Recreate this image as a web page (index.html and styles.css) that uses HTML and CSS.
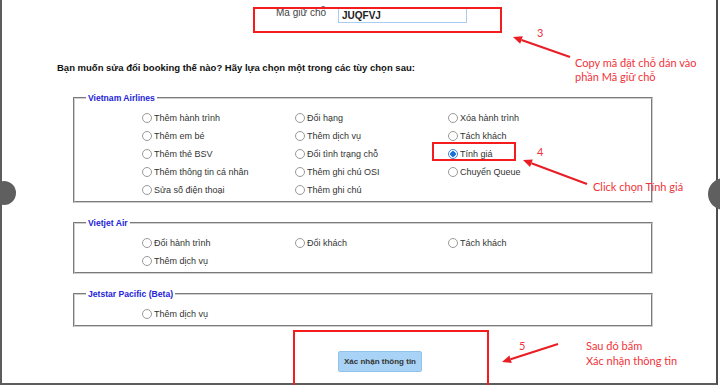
FILE: index.html
```html
<!DOCTYPE html>
<html lang="vi">
<head>
    <meta charset="UTF-8">
    <meta name="viewport" content="width=device-width, initial-scale=1.0">
    <title>Sửa đổi booking</title>
    <link rel="stylesheet" href="styles.css">
</head>
<body>
    <div class="viewer">
        <!-- Page content -->
        <div class="page">
            <div class="code-row">
                <label class="code-label" for="pnr">Mã giữ chỗ</label>
                <input class="code-input" id="pnr" type="text" value="JUQFVJ">
            </div>

            <p class="question">Bạn muốn sửa đổi booking thế nào? Hãy lựa chọn một trong các tùy chọn sau:</p>

            <fieldset class="airline">
                <legend>Vietnam Airlines</legend>
                <div class="options">
                    <label class="opt"><input type="radio" name="act">Thêm hành trình</label>
                    <label class="opt"><input type="radio" name="act">Đổi hạng</label>
                    <label class="opt"><input type="radio" name="act">Xóa hành trình</label>
                    <label class="opt"><input type="radio" name="act">Thêm em bé</label>
                    <label class="opt"><input type="radio" name="act">Thêm dịch vụ</label>
                    <label class="opt"><input type="radio" name="act">Tách khách</label>
                    <label class="opt"><input type="radio" name="act">Thêm thẻ BSV</label>
                    <label class="opt"><input type="radio" name="act">Đổi tình trạng chỗ</label>
                    <label class="opt"><input type="radio" name="act" checked>Tính giá</label>
                    <label class="opt"><input type="radio" name="act">Thêm thông tin cá nhân</label>
                    <label class="opt"><input type="radio" name="act">Thêm ghi chú OSI</label>
                    <label class="opt"><input type="radio" name="act">Chuyển Queue</label>
                    <label class="opt"><input type="radio" name="act">Sửa số điện thoại</label>
                    <label class="opt"><input type="radio" name="act">Thêm ghi chú</label>
                </div>
            </fieldset>

            <fieldset class="airline">
                <legend>Vietjet Air</legend>
                <div class="options">
                    <label class="opt"><input type="radio" name="act">Đổi hành trình</label>
                    <label class="opt"><input type="radio" name="act">Đổi khách</label>
                    <label class="opt"><input type="radio" name="act">Tách khách</label>
                    <label class="opt"><input type="radio" name="act">Thêm dịch vụ</label>
                </div>
            </fieldset>

            <fieldset class="airline">
                <legend>Jetstar Pacific (Beta)</legend>
                <div class="options">
                    <label class="opt"><input type="radio" name="act">Thêm dịch vụ</label>
                </div>
            </fieldset>

            <div class="actions">
                <button class="confirm" type="button">Xác nhận thông tin</button>
            </div>
        </div>

        <!-- Viewer nav buttons -->
        <div class="nav nav-left"></div>
        <div class="nav nav-right"></div>

        <!-- Tutorial annotations -->
        <div class="mark mark-code"></div>
        <div class="mark mark-price"></div>
        <div class="mark mark-confirm"></div>

        <svg class="arrows" width="720" height="385" viewBox="0 0 720 385">
            <line x1="570" y1="57" x2="521.5" y2="40"/>
            <polygon points="513,37 522.8,36.2 520.2,43.8"/>
            <line x1="587" y1="184" x2="531.4" y2="163.2"/>
            <polygon points="523,160 532.8,159.4 530,166.9"/>
            <line x1="558" y1="344" x2="510.6" y2="359.2"/>
            <polygon points="502,362 509.4,355.4 511.8,363"/>
        </svg>

        <div class="note step-3">3</div>
        <div class="note tip-3">Copy mã đặt chỗ dán vào<br>phần Mã giữ chỗ</div>
        <div class="note step-4">4</div>
        <div class="note tip-4">Click chọn Tính giá</div>
        <div class="note step-5">5</div>
        <div class="note tip-5">Sau đó bấm<br>Xác nhận thông tin</div>
    </div>
</body>
</html>
```

FILE: styles.css
```css
/* Global */
* {
    box-sizing: border-box;
}

body {
    margin: 0;
    background: #fff;
}

.viewer {
    position: relative;
    width: 720px;
    height: 385px;
    overflow: hidden;
    background: #fff;
    font-family: "Liberation Sans", Arial, sans-serif;
    color: #333;
}

.page {
    width: 718px;
    height: 385px;
    border-left: 2px solid #5c5c5c;
    border-right: 2px solid #4d4d4d;
    border-bottom: 2px solid #5c5c5c;
}

/* Booking code */
.code-row {
    display: flex;
    align-items: flex-start;
    padding: 7px 0 0 274px;
}

.code-label {
    width: 62px;
    font-size: 10px;
    line-height: 12px;
    color: #444;
}

.code-input {
    width: 129px;
    height: 15px;
    margin: 1px 0 0 0;
    padding: 0 3px;
    border: 1px solid #a9cdee;
    font-family: inherit;
    font-size: 10px;
    font-weight: bold;
    color: #222;
    outline: none;
}

.question {
    margin: 39px 0 0 55px;
    font-size: 9.5px;
    line-height: 12px;
    font-weight: bold;
    color: #111;
}

/* Airline groups */
.airline {
    width: 580px;
    margin: 19px 0 0 71px;
    padding: 6px 0 2px 11px;
    border: 2px groove #cfcfcf;
}

.airline + .airline {
    margin-top: 15px;
}

.airline legend {
    padding: 0 2px;
    font-size: 8.6px;
    line-height: 10px;
    font-weight: bold;
    color: #2424d8;
}

.options {
    display: grid;
    grid-template-columns: repeat(3, 153px);
    grid-auto-rows: 18px;
    margin-left: 56px;
}

.opt {
    display: flex;
    align-items: center;
    font-size: 9px;
    color: #333;
    white-space: nowrap;
}

.opt input {
    appearance: none;
    -webkit-appearance: none;
    width: 10px;
    height: 10px;
    margin: 0 2px 0 0;
    border: 1px solid #999;
    border-radius: 50%;
    background: #fff;
}

.opt input:checked {
    border-color: #3a83d6;
    background: radial-gradient(circle, #1a6fd8 0 2.5px, #fff 3px);
}

.actions {
    padding: 23px 0 0 336px;
}

.confirm {
    width: 84px;
    height: 21px;
    padding: 0;
    background: #a9d3f6;
    border: 1px solid #90c3ec;
    border-radius: 2px;
    font-family: inherit;
    font-size: 8px;
    font-weight: bold;
    color: #333;
}

/* Viewer nav buttons */
.nav {
    position: absolute;
    border-radius: 50%;
    background: #5f5f5f;
}

.nav-left {
    left: -8px;
    top: 181px;
    width: 24px;
    height: 24px;
}

.nav-right {
    left: 708px;
    top: 178px;
    width: 32px;
    height: 32px;
}

/* Annotations */
.mark {
    position: absolute;
    border: 2px solid #f41c1c;
}

.mark-code {
    left: 253px;
    top: 7px;
    width: 249px;
    height: 26px;
}

.mark-price {
    left: 432px;
    top: 142px;
    width: 84px;
    height: 19px;
}

.mark-confirm {
    left: 293px;
    top: 330px;
    width: 196px;
    height: 70px;
}

.arrows {
    position: absolute;
    left: 0;
    top: 0;
    pointer-events: none;
}

.arrows line {
    stroke: #ea1d24;
    stroke-width: 2;
}

.arrows polygon {
    fill: #ea1d24;
}

.note {
    position: absolute;
    font-family: Lato, "Liberation Sans", sans-serif;
    font-size: 11px;
    line-height: 13px;
    color: #f0333a;
    white-space: nowrap;
}

.step-3 { left: 537px; top: 26px; }
.tip-3 { left: 575px; top: 56px; line-height: 14px; }
.step-4 { left: 537px; top: 145px; }
.tip-4 { left: 593px; top: 180px; }
.step-5 { left: 519px; top: 339px; }
.tip-5 { left: 586px; top: 338px; line-height: 15px; }
```
